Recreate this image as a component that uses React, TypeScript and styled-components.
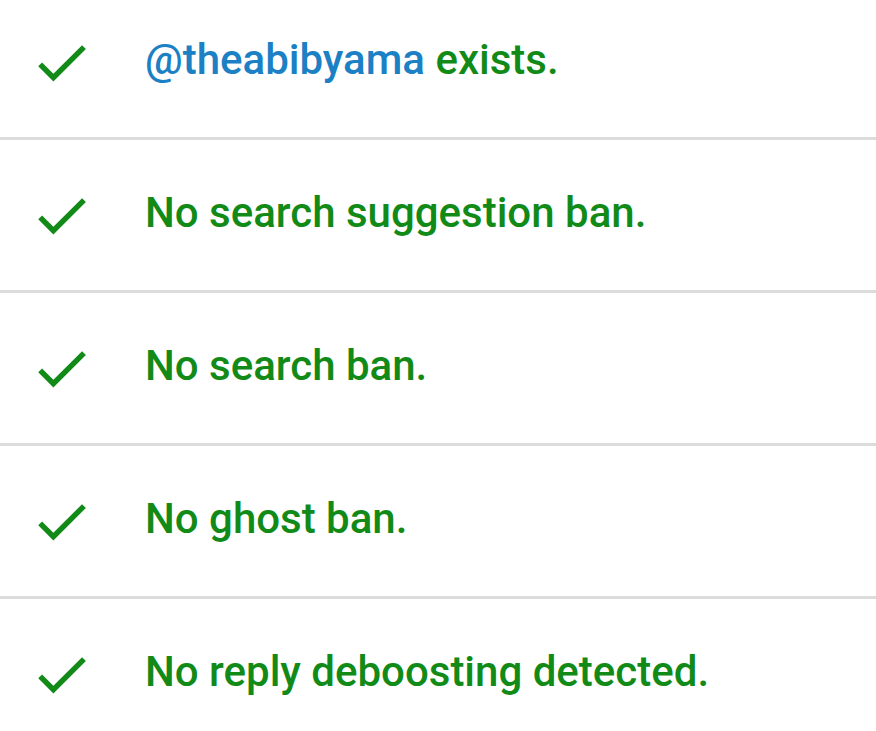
import styled, { createGlobalStyle } from 'styled-components';

const GlobalStyle = createGlobalStyle`
	html, body {
		margin: 0;
		padding: 0;
		background: #ffffff;
		overflow: hidden;
	}
`;

type Check = {
	handle?: string;
	text: string;
};

const checks: Check[] = [
	{ handle: '@theabibyama', text: ' exists.' },
	{ text: 'No search suggestion ban.' },
	{ text: 'No search ban.' },
	{ text: 'No ghost ban.' },
	{ text: 'No reply deboosting detected.' },
];

function CheckIcon() {
	return (
		<IconBox viewBox="0 0 24 24">
			<path d="M9 16.17L4.83 12l-1.42 1.41L9 19 21 7l-1.41-1.41z" fill="currentColor" />
		</IconBox>
	);
}

export default function App() {
	return (
		<>
			<GlobalStyle />
			<ResultList>
				{checks.map((c, i) => (
					<ResultRow key={i} $last={i === checks.length - 1}>
						<CheckIcon />
						<ResultText>
							{c.handle && <Handle>{c.handle}</Handle>}
							{c.text}
						</ResultText>
					</ResultRow>
				))}
			</ResultList>
		</>
	);
}

const ResultList = styled.ul`
	list-style: none;
	margin: -13px 0 0 0;
	padding: 0;
	font-family: Roboto, 'Noto Sans', sans-serif;
`;

const ResultRow = styled.li<{ $last: boolean }>`
	height: 150px;
	display: flex;
	flex-direction: row;
	align-items: center;
	border-bottom: ${(p) => (p.$last ? 'none' : '3px solid #dcdcdc')};
`;

const IconBox = styled.svg`
	width: 65px;
	height: 65px;
	margin-left: 29px;
	color: #118a17;
	flex-shrink: 0;
`;

const ResultText = styled.span`
	margin-left: 51px;
	padding-bottom: 5px;
	font-size: 42px;
	font-weight: 500;
	color: #118a17;
	white-space: nowrap;
`;

const Handle = styled.span`
	color: #1b80c4;
`;
